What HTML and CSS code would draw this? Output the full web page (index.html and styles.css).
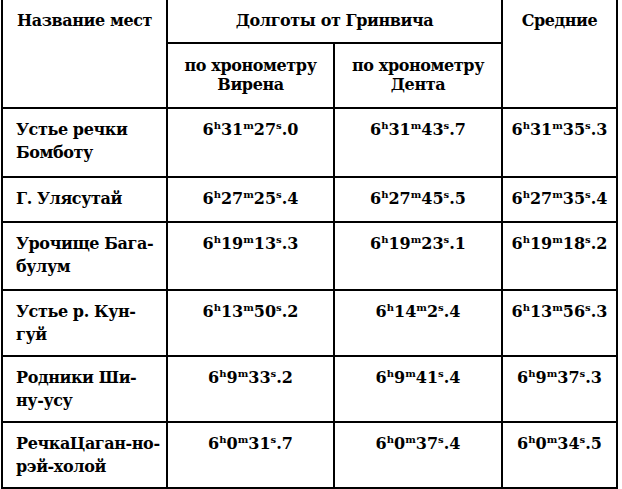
FILE: index.html
```html
<!DOCTYPE html>
<html lang="ru">
<head>
<meta charset="utf-8">
<title>Долготы от Гринвича</title>
<link rel="stylesheet" href="styles.css">
</head>
<body>
<table class="tbl">
  <colgroup>
    <col class="c-name">
    <col class="c-v">
    <col class="c-d">
    <col class="c-avg">
  </colgroup>
  <thead>
    <tr class="h1">
      <th rowspan="2" class="label">Название мест</th>
      <th colspan="2" class="label">Долготы от Гринвича</th>
      <th rowspan="2" class="label">Средние</th>
    </tr>
    <tr class="h2">
      <th class="sub label">по хронометру<br>Вирена</th>
      <th class="sub label">по хронометру<br>Дента</th>
    </tr>
  </thead>
  <tbody>
    <tr class="r1">
      <td class="place">Устье речки<br>Бомботу</td>
      <td>6<sup>h</sup>31<sup>m</sup>27<sup>s</sup>.0</td>
      <td>6<sup>h</sup>31<sup>m</sup>43<sup>s</sup>.7</td>
      <td>6<sup>h</sup>31<sup>m</sup>35<sup>s</sup>.3</td>
    </tr>
    <tr class="r2">
      <td class="place">Г. Улясутай</td>
      <td>6<sup>h</sup>27<sup>m</sup>25<sup>s</sup>.4</td>
      <td>6<sup>h</sup>27<sup>m</sup>45<sup>s</sup>.5</td>
      <td>6<sup>h</sup>27<sup>m</sup>35<sup>s</sup>.4</td>
    </tr>
    <tr class="r3">
      <td class="place">Урочище Бага-<br>булум</td>
      <td>6<sup>h</sup>19<sup>m</sup>13<sup>s</sup>.3</td>
      <td>6<sup>h</sup>19<sup>m</sup>23<sup>s</sup>.1</td>
      <td>6<sup>h</sup>19<sup>m</sup>18<sup>s</sup>.2</td>
    </tr>
    <tr class="r4">
      <td class="place">Устье р. Кун-<br>гуй</td>
      <td>6<sup>h</sup>13<sup>m</sup>50<sup>s</sup>.2</td>
      <td>6<sup>h</sup>14<sup>m</sup>2<sup>s</sup>.4</td>
      <td>6<sup>h</sup>13<sup>m</sup>56<sup>s</sup>.3</td>
    </tr>
    <tr class="r5">
      <td class="place">Родники Ши-<br>ну-усу</td>
      <td>6<sup>h</sup>9<sup>m</sup>33<sup>s</sup>.2</td>
      <td>6<sup>h</sup>9<sup>m</sup>41<sup>s</sup>.4</td>
      <td>6<sup>h</sup>9<sup>m</sup>37<sup>s</sup>.3</td>
    </tr>
    <tr class="r6">
      <td class="place">РечкаЦаган-но-<br>рэй-холой</td>
      <td>6<sup>h</sup>0<sup>m</sup>31<sup>s</sup>.7</td>
      <td>6<sup>h</sup>0<sup>m</sup>37<sup>s</sup>.4</td>
      <td>6<sup>h</sup>0<sup>m</sup>34<sup>s</sup>.5</td>
    </tr>
  </tbody>
</table>
</body>
</html>
```

FILE: styles.css
```css
html, body {
  margin: 0;
  padding: 0;
  background: #fff;
}

body {
  font-family: "DejaVu Serif", "Liberation Serif", serif;
  font-weight: bold;
  font-size: 16px;
  color: #000;
}

.tbl {
  border-collapse: collapse;
  table-layout: fixed;
  width: 615px;
  margin-left: 1px;
}

.c-name { width: 165px; }
.c-v { width: 167px; }
.c-d { width: 168px; }
.c-avg { width: 115px; }

.tbl th,
.tbl td {
  border: 2px solid #000;
  padding: 9px 0 0 0;
  vertical-align: top;
  text-align: center;
  line-height: 24px;
  font-weight: bold;
}

.tbl .label,
.tbl td.place {
  letter-spacing: -0.4px;
}

.tbl thead tr.h1 th {
  border-top: none;
}

.tbl th.sub {
  padding-top: 12px;
  line-height: 19px;
}

.tbl td.place {
  text-align: left;
  padding-left: 13px;
  line-height: 23px;
}

.tbl sup {
  font-size: 10px;
  line-height: 0;
  vertical-align: 6px;
}

tr.h1 { height: 43px; }
tr.h2 { height: 65px; }
tr.r1 { height: 69px; }
tr.r2 { height: 45px; }
tr.r3 { height: 68px; }
tr.r4 { height: 66px; }
tr.r5 { height: 66px; }
tr.r6 { height: 66px; }
```
